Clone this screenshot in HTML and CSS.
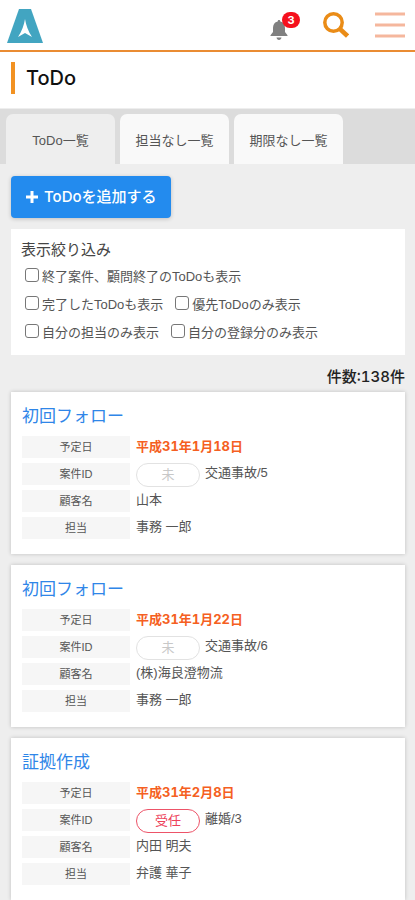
FILE: index.html
```html
<!DOCTYPE html>
<html lang="ja">
<head>
<meta charset="utf-8">
<meta name="viewport" content="width=device-width, initial-scale=1">
<title>ToDo</title>
<link rel="stylesheet" href="styles.css">
</head>
<body>
<header class="header">
  <a class="logo" href="#" aria-label="ホーム">
    <svg width="36" height="34" viewBox="0 0 36 34"><path fill="#42a5c1" d="M12 0h12l12 34H0z"/><path fill="#fff" d="M18 10c1 6 3 12 7 18l-7-4-7 4c4-6 6-12 7-18z"/></svg>
  </a>
  <div class="actions">
    <button class="icon-button bell" aria-label="通知">
      <svg width="18" height="20" viewBox="0 0 18 20"><path fill="#808080" d="M9 0c1 0 1.300.7 1.300 1.500C13.500 2.200 15 4.800 15 8v4l2.500 3.200V16H.5v-.8L3 12V8c0-3.200 1.500-5.800 4.700-6.500C7.700.7 8 0 9 0zM6.500 17.500h5C11.300 19 10.300 20 9 20s-2.300-1-2.500-2.500z"/></svg>
      <span class="badge">3</span>
    </button>
    <button class="icon-button" aria-label="検索">
      <svg width="26" height="26" viewBox="0 0 26 26" fill="none" stroke="#ea8c17"><circle cx="10.500" cy="10.500" r="8.700" stroke-width="3.500"/><path stroke-width="4.500" d="M17 17l7.500 7"/></svg>
    </button>
    <button class="icon-button" aria-label="メニュー">
      <svg width="30" height="26" viewBox="0 0 30 26" stroke="#f5b79d" stroke-width="3"><path d="M0 2h30M0 13h30M0 24h30"/></svg>
    </button>
  </div>
</header>
<div class="title-bar"><h1>ToDo</h1></div>
<nav class="tabs">
  <a class="tab active" href="#">ToDo一覧</a>
  <a class="tab" href="#">担当なし一覧</a>
  <a class="tab" href="#">期限なし一覧</a>
</nav>
<main>
  <button class="add">
    <svg width="14" height="14" viewBox="0 0 14 14" stroke="#fff" stroke-width="3"><path d="M7 1v12M1 7h12"/></svg>
    ToDoを追加する
  </button>
  <fieldset class="filter">
    <div class="filter-title">表示絞り込み</div>
    <div class="checks"><label><input type="checkbox">終了案件、顧問終了のToDoも表示</label></div>
    <div class="checks"><label><input type="checkbox">完了したToDoも表示</label><label><input type="checkbox">優先ToDoのみ表示</label></div>
    <div class="checks"><label><input type="checkbox">自分の担当のみ表示</label><label><input type="checkbox">自分の登録分のみ表示</label></div>
  </fieldset>
  <p class="count">件数:138件</p>
  <article class="card">
    <h2><a href="#">初回フォロー</a></h2>
    <dl>
      <dt>予定日</dt><dd class="date">平成31年1月18日</dd>
      <dt>案件ID</dt><dd><span class="status">未</span>交通事故/5</dd>
      <dt>顧客名</dt><dd>山本</dd>
      <dt>担当</dt><dd>事務 一郎</dd>
    </dl>
  </article>
  <article class="card">
    <h2><a href="#">初回フォロー</a></h2>
    <dl>
      <dt>予定日</dt><dd class="date">平成31年1月22日</dd>
      <dt>案件ID</dt><dd><span class="status">未</span>交通事故/6</dd>
      <dt>顧客名</dt><dd>(株)海良澄物流</dd>
      <dt>担当</dt><dd>事務 一郎</dd>
    </dl>
  </article>
  <article class="card">
    <h2><a href="#">証拠作成</a></h2>
    <dl>
      <dt>予定日</dt><dd class="date">平成31年2月8日</dd>
      <dt>案件ID</dt><dd><span class="status accepted">受任</span>離婚/3</dd>
      <dt>顧客名</dt><dd>内田 明夫</dd>
      <dt>担当</dt><dd>弁護 華子</dd>
    </dl>
  </article>
</main>
</body>
</html>
```

FILE: styles.css
```css
* { box-sizing: border-box; }
html { scrollbar-width: none; }
body {
  margin: 0;
  background: #eee;
  color: #555;
  font: 13px/20px "Liberation Sans", "Noto Sans CJK JP", sans-serif;
}
a { color: inherit; text-decoration: none; }
button { border: 0; padding: 0; background: none; }
svg { display: block; }

.header {
  display: flex;
  justify-content: space-between;
  align-items: center;
  height: 52px;
  padding: 0 10px 0 7px;
  background: #fff;
  border-bottom: 2px solid #ea8c32;
}
.logo { padding-top: 2px; }
.actions { display: flex; align-items: center; gap: 26px; }
.icon-button { position: relative; }
.bell { padding-top: 10px; margin-right: 9px; }
.badge {
  position: absolute;
  top: 2px;
  left: 12px;
  width: 18px;
  height: 16px;
  border-radius: 8px;
  background: #f5101c;
  color: #fff;
  font: bold 11px/16px Inter, sans-serif;
  text-align: center;
}

.title-bar { padding: 10px 11px 14px; background: #fff; border-bottom: 1px solid #eee; }
h1 {
  margin: 0;
  padding-left: 11px;
  border-left: 4px solid #f29222;
  color: #111;
  font: 500 20px/32px Inter, sans-serif;
}

.tabs {
  display: flex;
  gap: 5px;
  padding: 5px 6px 0;
  background: #dcdcdc;
}
.tab {
  flex: 0 1 109px;
  padding-top: 4px;
  border-radius: 7px 7px 0 0;
  background: #f9f9f9;
  line-height: 46px;
  text-align: center;
  white-space: nowrap;
}
.tab.active { background: #eee; }

main { padding: 12px 10px 12px 11px; }
.add {
  display: flex;
  align-items: center;
  gap: 5px;
  height: 42px;
  padding: 0 14px;
  border-radius: 4px;
  background: #238bee;
  color: #fff;
  box-shadow: 0 1px 4px #0003;
  font: 500 15px/20px Inter, "Noto Sans CJK JP", sans-serif;
}

.filter {
  min-width: 0;
  margin: 11px 0 0;
  padding: 11px 10px 8px;
  border: 0;
  background: #fff;
}
.filter-title { margin-bottom: 3px; color: #444; font-size: 15px; line-height: 20px; }
.checks { display: flex; gap: 12px; padding-left: 4px; line-height: 28px; }
.checks label { display: flex; align-items: center; gap: 3px; }
.checks input {
  appearance: none;
  width: 14px;
  height: 14px;
  margin: 0 0 5px;
  border: 1px solid #777;
  border-radius: 3px;
  background: #fff;
}

.count {
  margin: 12px 0 5px;
  color: #222;
  font: 500 15px/20px Inter, "Noto Sans CJK JP", sans-serif;
  font-variant-numeric: tabular-nums;
  text-align: right;
}

.card {
  margin-bottom: 11px;
  padding: 13px 11px 15px;
  background: #fff;
  box-shadow: 0 0 4px #0003;
}
h2 {
  margin: 0 0 7px;
  color: #2f86e8;
  font-size: 17px;
  font-weight: normal;
  line-height: 24px;
}
dl {
  display: grid;
  grid-template-columns: 108px 1fr;
  grid-auto-rows: 22px;
  gap: 5px 6px;
  margin: 0;
}
dt { background: #f6f6f6; font-size: 11px; line-height: 22px; text-align: center; }
dd { display: flex; margin: 0; }
.date {
  color: #f55f22;
  font-family: Inter, "Noto Sans CJK JP", sans-serif;
  font-weight: bold;
  font-variant-numeric: tabular-nums;
}
.status {
  width: 64px;
  height: 24px;
  margin-right: 5px;
  border: 1px solid #e2e2e2;
  border-radius: 12px;
  color: #c8c8c8;
  line-height: 22px;
  text-align: center;
}
.accepted { border-color: #ed5368; color: #ed4059; }
```
